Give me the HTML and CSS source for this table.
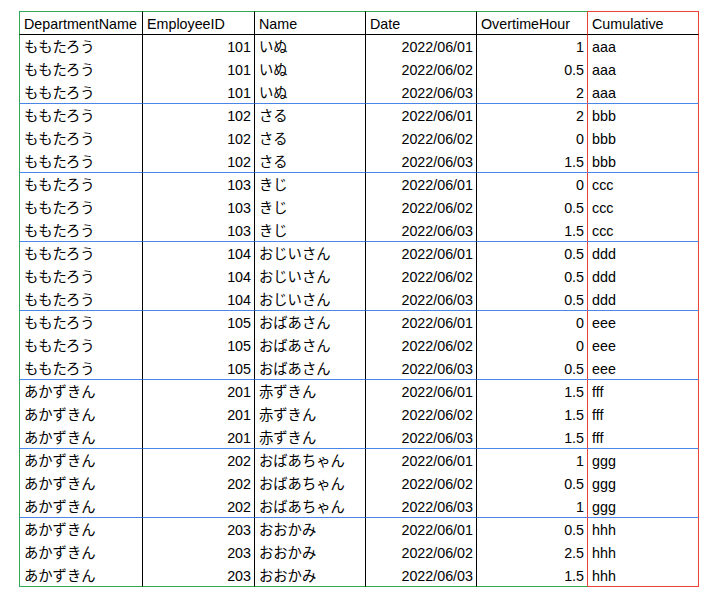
FILE: index.html
```html
<!DOCTYPE html>
<html lang="ja">
<head>
<meta charset="utf-8">
<title>Overtime</title>
<link rel="stylesheet" href="styles.css">
</head>
<body>
<table class="sheet">
  <thead>
    <tr class="head">
      <th class="c1">DepartmentName</th>
      <th class="c2">EmployeeID</th>
      <th class="c3">Name</th>
      <th class="c4">Date</th>
      <th class="c5">OvertimeHour</th>
      <th class="c6">Cumulative</th>
    </tr>
  </thead>
  <tbody>
    <tr><td class="c1">ももたろう</td><td class="c2 num">101</td><td class="c3">いぬ</td><td class="c4 num">2022/06/01</td><td class="c5 num">1</td><td class="c6">aaa</td></tr>
    <tr><td class="c1">ももたろう</td><td class="c2 num">101</td><td class="c3">いぬ</td><td class="c4 num">2022/06/02</td><td class="c5 num">0.5</td><td class="c6">aaa</td></tr>
    <tr class="end"><td class="c1">ももたろう</td><td class="c2 num">101</td><td class="c3">いぬ</td><td class="c4 num">2022/06/03</td><td class="c5 num">2</td><td class="c6">aaa</td></tr>

    <tr><td class="c1">ももたろう</td><td class="c2 num">102</td><td class="c3">さる</td><td class="c4 num">2022/06/01</td><td class="c5 num">2</td><td class="c6">bbb</td></tr>
    <tr><td class="c1">ももたろう</td><td class="c2 num">102</td><td class="c3">さる</td><td class="c4 num">2022/06/02</td><td class="c5 num">0</td><td class="c6">bbb</td></tr>
    <tr class="end"><td class="c1">ももたろう</td><td class="c2 num">102</td><td class="c3">さる</td><td class="c4 num">2022/06/03</td><td class="c5 num">1.5</td><td class="c6">bbb</td></tr>

    <tr><td class="c1">ももたろう</td><td class="c2 num">103</td><td class="c3">きじ</td><td class="c4 num">2022/06/01</td><td class="c5 num">0</td><td class="c6">ccc</td></tr>
    <tr><td class="c1">ももたろう</td><td class="c2 num">103</td><td class="c3">きじ</td><td class="c4 num">2022/06/02</td><td class="c5 num">0.5</td><td class="c6">ccc</td></tr>
    <tr class="end"><td class="c1">ももたろう</td><td class="c2 num">103</td><td class="c3">きじ</td><td class="c4 num">2022/06/03</td><td class="c5 num">1.5</td><td class="c6">ccc</td></tr>

    <tr><td class="c1">ももたろう</td><td class="c2 num">104</td><td class="c3">おじいさん</td><td class="c4 num">2022/06/01</td><td class="c5 num">0.5</td><td class="c6">ddd</td></tr>
    <tr><td class="c1">ももたろう</td><td class="c2 num">104</td><td class="c3">おじいさん</td><td class="c4 num">2022/06/02</td><td class="c5 num">0.5</td><td class="c6">ddd</td></tr>
    <tr class="end"><td class="c1">ももたろう</td><td class="c2 num">104</td><td class="c3">おじいさん</td><td class="c4 num">2022/06/03</td><td class="c5 num">0.5</td><td class="c6">ddd</td></tr>

    <tr><td class="c1">ももたろう</td><td class="c2 num">105</td><td class="c3">おばあさん</td><td class="c4 num">2022/06/01</td><td class="c5 num">0</td><td class="c6">eee</td></tr>
    <tr><td class="c1">ももたろう</td><td class="c2 num">105</td><td class="c3">おばあさん</td><td class="c4 num">2022/06/02</td><td class="c5 num">0</td><td class="c6">eee</td></tr>
    <tr class="end"><td class="c1">ももたろう</td><td class="c2 num">105</td><td class="c3">おばあさん</td><td class="c4 num">2022/06/03</td><td class="c5 num">0.5</td><td class="c6">eee</td></tr>

    <tr><td class="c1">あかずきん</td><td class="c2 num">201</td><td class="c3">赤ずきん</td><td class="c4 num">2022/06/01</td><td class="c5 num">1.5</td><td class="c6">fff</td></tr>
    <tr><td class="c1">あかずきん</td><td class="c2 num">201</td><td class="c3">赤ずきん</td><td class="c4 num">2022/06/02</td><td class="c5 num">1.5</td><td class="c6">fff</td></tr>
    <tr class="end"><td class="c1">あかずきん</td><td class="c2 num">201</td><td class="c3">赤ずきん</td><td class="c4 num">2022/06/03</td><td class="c5 num">1.5</td><td class="c6">fff</td></tr>

    <tr><td class="c1">あかずきん</td><td class="c2 num">202</td><td class="c3">おばあちゃん</td><td class="c4 num">2022/06/01</td><td class="c5 num">1</td><td class="c6">ggg</td></tr>
    <tr><td class="c1">あかずきん</td><td class="c2 num">202</td><td class="c3">おばあちゃん</td><td class="c4 num">2022/06/02</td><td class="c5 num">0.5</td><td class="c6">ggg</td></tr>
    <tr class="end"><td class="c1">あかずきん</td><td class="c2 num">202</td><td class="c3">おばあちゃん</td><td class="c4 num">2022/06/03</td><td class="c5 num">1</td><td class="c6">ggg</td></tr>

    <tr><td class="c1">あかずきん</td><td class="c2 num">203</td><td class="c3">おおかみ</td><td class="c4 num">2022/06/01</td><td class="c5 num">0.5</td><td class="c6">hhh</td></tr>
    <tr><td class="c1">あかずきん</td><td class="c2 num">203</td><td class="c3">おおかみ</td><td class="c4 num">2022/06/02</td><td class="c5 num">2.5</td><td class="c6">hhh</td></tr>
    <tr class="last"><td class="c1">あかずきん</td><td class="c2 num">203</td><td class="c3">おおかみ</td><td class="c4 num">2022/06/03</td><td class="c5 num">1.5</td><td class="c6">hhh</td></tr>
  </tbody>
</table>
</body>
</html>
```

FILE: styles.css
```css
html, body {
  margin: 0;
  padding: 0;
  background: #ffffff;
}

body {
  font-family: "Liberation Sans", "Noto Sans CJK JP", sans-serif;
  font-size: 14.3px;
  color: #000000;
}

.sheet {
  margin: 11px 0 0 19px;
  border-collapse: separate;
  border-spacing: 0;
  table-layout: fixed;
  width: 680px;
}

.sheet th,
.sheet td {
  box-sizing: border-box;
  padding: 3px 3px 1px 4px;
  line-height: 19px;
  font-weight: normal;
  text-align: left;
  vertical-align: top;
  white-space: nowrap;
  overflow: hidden;
  border-right: 1px solid #000000;
}

.sheet .num {
  text-align: right;
}

.c1 { width: 124px; border-left: 1px solid #34a853; }
.c2 { width: 112px; }
.c3 { width: 111px; }
.c4 { width: 111px; }
.c5 { width: 111px; }
.c6 { width: 111px; }

.sheet .c5 { border-right-color: #ea4335; }
.sheet .c6 { border-right-color: #ea4335; }

.head th {
  border-top: 1px solid #34a853;
  border-bottom: 1px solid #000000;
  padding-bottom: 0;
}

.head th.c6 {
  border-top-color: #ea4335;
}

.end td {
  border-bottom: 1px solid #4a86e8;
  padding-bottom: 0;
}

.last td {
  border-bottom: 1px solid #34a853;
  padding-bottom: 0;
}

.last td.c6 {
  border-bottom-color: #ea4335;
}
```
